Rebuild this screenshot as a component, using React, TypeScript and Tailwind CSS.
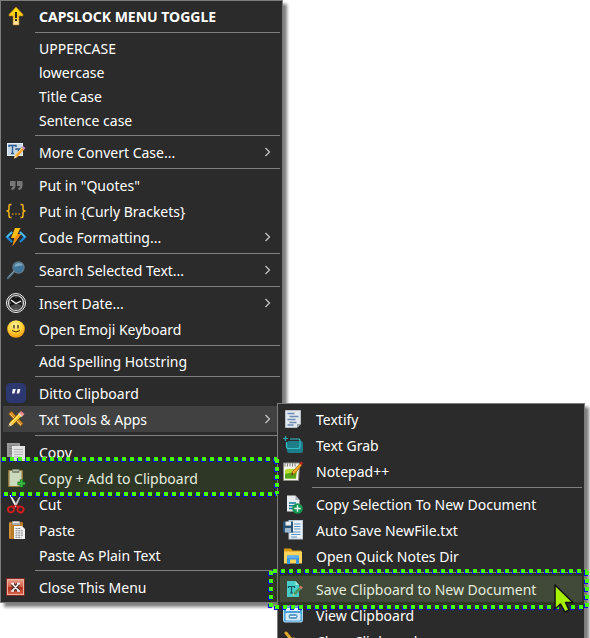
import type { ReactNode } from "react";

function Icon({ children }: { children?: ReactNode }) {
  return (
    <svg className="size-5 shrink-0 overflow-visible" viewBox="0 0 20 20" fill="none" aria-hidden="true">
      {children}
    </svg>
  );
}

const capsArrow = (
  <Icon>
    <defs>
      <linearGradient id="caps" x1="0" y1="0" x2="0" y2="1">
        <stop offset="0" stopColor="#ffe500" />
        <stop offset="0.5" stopColor="#ffc61a" />
        <stop offset="1" stopColor="#ffe9b8" />
      </linearGradient>
    </defs>
    <path d="M10 1 L17 8.500 V10 H13 V19 H7 V10 H3 V8.500Z" fill="url(#caps)" stroke="#b97a10" strokeWidth="0.600" />
    <path d="M10 6v6M10 13v2" stroke="#111" strokeWidth="1.800" />
  </Icon>
);

const convertCase = (
  <Icon>
    <rect x="1" y="1" width="16" height="13" fill="#c6d7e6" />
    <rect x="1.500" y="1.500" width="15" height="12" stroke="#e8f0f6" />
    <path d="M3 5V3.500h7V5M6.500 3.500v8M5 11.500h3M10 8V7h5v1M12.500 7v4.500" stroke="#2d5b8c" strokeWidth="1.400" />
    <path d="M8 16.500l1.500-4L16 5l2.500 2-7 8Z" fill="#f5a52c" />
    <path d="M9.500 13l7-7.500" stroke="#ffe09a" />
    <path d="M15.500 5.500L17 4l2.500 2L18 7.500Z" fill="#c58fc9" />
    <path d="M8 16.500l1-3 2 1.500Z" fill="#f7e6c8" />
  </Icon>
);

const quotes = (
  <Icon>
    <path d="M4 6h5.500v4.500Q9.500 14 6 15.200L5 13.500Q6.800 12.700 7 11H4Z" fill="#777" />
    <path d="M11 6h5.500v4.500Q16.500 14 13 15.200L12 13.500Q13.800 12.700 14 11H11Z" fill="#777" />
  </Icon>
);

const braces = (
  <Icon>
    <g stroke="#f5b21b" strokeWidth="1.500">
      <path d="M5.500 3.500H4.200Q3 3.500 3 5v3Q3 10 .5 10Q3 10 3 12v3Q3 16.500 4.200 16.500H5.500" />
      <path d="M14.500 3.500h1.300Q17 3.500 17 5v3q0 2 2.500 2Q17 10 17 12v3q0 1.500-1.200 1.500h-1.300" />
    </g>
    <path d="M6 13h1.500M9.200 13h1.500M12.400 13h1.500" stroke="#c8921c" strokeWidth="1.500" />
  </Icon>
);

const bolt = (
  <Icon>
    <path d="M6 5L1 10l5 5" stroke="#1c86d1" strokeWidth="2.400" />
    <path d="M14 5l5 5-5 5" stroke="#1c86d1" strokeWidth="2.400" />
    <path d="M6 5L1 10M14 5l5 5" stroke="#52c5ee" strokeWidth="1.600" />
    <path d="M9 1h5.500L11.500 7H15L6.500 19l2-8H5Z" fill="#ffbd17" />
    <path d="M11.500 7H15L6.500 19l2-8 2-2Z" fill="#f48b16" />
  </Icon>
);

const magnifier = (
  <Icon>
    <path d="M8 11.500L2 18" stroke="#536d7d" strokeWidth="2.400" strokeLinecap="round" />
    <path d="M8 11l-5 5.500" stroke="#8caabb" strokeWidth="0.800" />
    <circle cx="12.500" cy="7.500" r="5.600" fill="#3f7598" stroke="#65798a" strokeWidth="1.200" />
    <path d="M8.500 7Q9 3 13 3q3 0 4 2.500Q13 5 8.500 7Z" fill="#7fa9c2" />
  </Icon>
);

const clock = (
  <Icon>
    <circle cx="10" cy="10" r="9.500" fill="#3d3d3d" stroke="#eee" strokeWidth="1" />
    <circle cx="10" cy="10" r="7.500" fill="#171717" stroke="#ddd" strokeWidth="1.200" />
    <path d="M4 13a7 7 0 0 0 12 0Q13 9 4 13Z" fill="#4b4b4b" />
    <path d="M5 7l5 3.500L15 8" stroke="#fff" strokeWidth="1.200" />
    <path d="M10 3.500v1M10 15.500v1M3.500 10h1M15.500 10h1" stroke="#bbb" />
  </Icon>
);

const emoji = (
  <Icon>
    <defs>
      <radialGradient id="smile" cx="0.45" cy="0.3" r="0.75">
        <stop offset="0" stopColor="#fff3a3" />
        <stop offset="0.5" stopColor="#ffd43b" />
        <stop offset="1" stopColor="#f08c00" />
      </radialGradient>
    </defs>
    <circle cx="10" cy="10" r="8.800" fill="url(#smile)" />
    <path d="M8 6v3.500M12 6v3.500" stroke="#2b1c05" strokeWidth="1.200" />
    <path d="M6 11.500Q10 14.500 14 11.500" stroke="#3a2505" strokeWidth="1" />
  </Icon>
);

const ditto = (
  <Icon>
    <rect width="20" height="20" rx="4.500" fill="#2d3770" />
    <path d="M6.800 6h3L8.500 10.500H6Z M11.500 6h3l-1.300 4.500h-2.500Z" fill="#fff" />
  </Icon>
);

const tools = (
  <Icon>
    <path d="M2.500 5l3-3L17 14.500l-2.500 3Z" fill="#d9932c" stroke="#6e430f" strokeWidth="0.700" />
    <path d="M4 5l11 11" stroke="#f3c06a" strokeWidth="1" />
    <path d="M2.500 17.500L4 13 13.500 3.500l3 3L7 16Z" fill="#f6c62e" stroke="#6e4a0f" strokeWidth="0.700" />
    <path d="M4.500 14.500l9.500-9.500" stroke="#fff08a" strokeWidth="1" />
    <path d="M13 4l2-2 3.500 3-2 2.500Z" fill="#ee8a8d" />
    <path d="M12.500 4.500l3.500 3" stroke="#ddd" strokeWidth="1.300" />
    <path d="M2 18l2-4.500 2.500 2.500Z" fill="#f0dfbf" />
    <path d="M2 18l1-2 1 1Z" fill="#222" />
  </Icon>
);

const copyPages = (
  <Icon>
    <rect x="1" y="1" width="13" height="14" fill="#999" />
    <path d="M3 4h8M3 6.500h3M3 9h3M3 11.500h3" stroke="#777" />
    <path d="M6 4h13v15H6Z" fill="#e4e4e4" />
    <path d="M8 7.500h9M8 10h9M8 12.500h9M8 15h6" stroke="#b5b5b5" />
  </Icon>
);

const clipboardAdd = (
  <Icon>
    <rect x="2" y="2" width="15" height="17" rx="1" fill="#9c7445" />
    <rect x="3.500" y="3" width="12" height="15" fill="#e1e8da" />
    <rect x="6" y="1" width="7.500" height="4" rx="1" fill="#8d9189" />
    <path d="M7 2.500h5.500" stroke="#cfd3ca" />
    <path d="M15.500 11.500v8M11.500 15.500h8" stroke="#0b641e" strokeWidth="3.400" />
    <path d="M15.500 12v7M12 15.500h7" stroke="#39bf4c" strokeWidth="2.200" />
  </Icon>
);

const scissors = (
  <Icon>
    <path d="M3.500 1L5 1l6.500 11-2 1.500Z" fill="#f2f2f2" />
    <path d="M15.500 1L14.500 .8l-6.500 11 2 1.500Z" fill="#c2c2c2" />
    <path d="M8.500 11l-1 3M10.500 11l1.500 3" stroke="#c71515" strokeWidth="2" />
    <ellipse cx="5" cy="15.500" rx="3" ry="2.800" transform="rotate(-25 5 15.500)" stroke="#d51c1c" strokeWidth="1.900" />
    <ellipse cx="14.500" cy="15.500" rx="3" ry="2.800" transform="rotate(25 14.500 15.500)" stroke="#d51c1c" strokeWidth="1.900" />
  </Icon>
);

const paste = (
  <Icon>
    <rect x="3" y="2" width="14" height="17" rx="1" fill="#b87b24" />
    <path d="M4 3v15" stroke="#e3aa51" />
    <rect x="6" y="1" width="8" height="4" rx="1" fill="#aaa" />
    <path d="M7 2.500h6" stroke="#eee" />
    <path d="M8 6h8l3 3v10H8Z" fill="#f2f2f2" />
    <path d="M9.500 8.500h5M9.500 10.800h8M9.500 13h8M9.500 15.200h8M9.500 17.300h6" stroke="#777" strokeWidth="0.900" strokeDasharray="2 0.700" />
  </Icon>
);

const closeBox = (
  <Icon>
    <defs>
      <linearGradient id="close" x1="0" y1="0" x2="0" y2="1">
        <stop offset="0" stopColor="#e9a493" />
        <stop offset="0.48" stopColor="#d4604b" />
        <stop offset="0.5" stopColor="#b22a18" />
        <stop offset="1" stopColor="#dd6e55" />
      </linearGradient>
    </defs>
    <rect x="0.500" y="1.500" width="18" height="17" fill="url(#close)" stroke="#7c2a20" />
    <rect x="1.500" y="2.500" width="16" height="15" stroke="#eab1a4" />
    <path d="M6.500 7l6 6.500M12.500 7l-6 6.500" stroke="#4b2a26" strokeWidth="4" />
    <path d="M6.500 7l6 6.500M12.500 7l-6 6.500M5 6.500h3M11 6.500h3M5 14h3M11 14h3" stroke="#eee" strokeWidth="1.700" />
  </Icon>
);

const textify = (
  <Icon>
    <path d="M2.500 1.500h15V15l-3.500 3.500H2.500Z" fill="#e3e8ed" stroke="#b9c0c8" />
    <path d="M14 18.500V15h3.500Z" fill="#98a3ad" />
    <path d="M4.500 4.500h7M6.500 7.500h9M4.500 10.500h8M6.500 13.500h7M4.500 16h6" stroke="#6b8bb5" strokeWidth="1.600" />
  </Icon>
);

const textGrab = (
  <Icon>
    <rect x="4" y="6" width="16" height="12" rx="2.500" fill="#1d7e89" />
    <path d="M7 4h8.500Q17 4 17 5.500v6q0 2-2 2H5q-1.500 0-1.500-1.500V7" stroke="#35c0cc" strokeWidth="1.200" />
    <path d="M2.500 1v5M0 3.500h5" stroke="#2ba5b2" strokeWidth="1.200" />
  </Icon>
);

const notepad = (
  <Icon>
    <path d="M.5 2h16l-1 17.500H.5Z" fill="#f4f4ee" stroke="#8c8c84" />
    <path d="M2 2.500v3M4.500 2.500v3M7 2.500v3M9.500 2.500v3M12 2.500v3" stroke="#777" />
    <path d="M2 9q5-2.500 12 0l-1 8.500H2Z" fill="#b9dc2f" />
    <path d="M2 13q6-1 11.500-3l-.7 7.500H2Z" fill="#57a51a" />
    <path d="M8.500 14l1-3.500L17 2.500l2 1.500-7.500 9Z" fill="#f7a81e" stroke="#7a4a09" strokeWidth="0.600" />
    <path d="M16.500 2.500L18 .5l2 1.500L18.800 4Z" fill="#c3202b" />
    <path d="M8.500 14l.7-2 1.300 1Z" fill="#222" />
  </Icon>
);

const docAdd = (
  <Icon>
    <path d="M4 1.500h8.500l4 4.500V17.500H4Z" fill="#e9edef" />
    <path d="M12.500 1.500V6h4Z" fill="#a9b1b6" />
    <path d="M6 9h7M6 11.700h6M6 14.400h4" stroke="#147a9c" strokeWidth="1.500" />
    <circle cx="14.500" cy="14.500" r="5.300" fill="#179553" />
    <path d="M14.500 11.300v6.400M11.300 14.500h6.400" stroke="#e9fff0" strokeWidth="1.400" />
  </Icon>
);

const autoSave = (
  <Icon>
    <rect x="6" y="0.500" width="13.500" height="18.500" fill="#edf2f6" stroke="#b8c9d8" />
    <path d="M11 4h6.500M11 6.500h6.500M11 9h6.500M8 12h9.500M8 14.500h9.500M8 17h6" stroke="#5a94c4" strokeWidth="1.200" />
    <rect x="0" y="1.500" width="10" height="11" fill="#2a5276" />
    <rect x="2.500" y="1.500" width="5.500" height="4" fill="#e8eef3" />
    <rect x="2" y="8" width="6" height="4.500" fill="#9fb8cb" />
  </Icon>
);

const folder = (
  <Icon>
    <path d="M1 2.500h7l1.500 2H18V7H1Z" fill="#dc9a12" />
    <path d="M1 5.500h18v12H1Z" fill="#fdd35c" />
    <path d="M4 18v-7.500q0-1 1-1h10q1 0 1 1V18h-3v-4.500H7V18Z" fill="#3d97e2" />
    <path d="M4 12v-1.500q0-1 1-1h10q1 0 1 1V12Z" fill="#5eb0f0" />
  </Icon>
);

const saveDoc = (
  <Icon>
    <path d="M4 2h8.500L16 6v12H4Z" fill="#48dbe6" />
    <path d="M12.500 2v4H16Z" fill="#b5f5f8" />
    <path d="M5.500 9V7.500h6V9M8.500 7.500V14M7 14h3" stroke="#0d5270" strokeWidth="1.200" />
    <path d="M10 16.500l1-3L16.500 8l2 2-5.500 5.500Z" fill="#4e9d70" />
    <path d="M16 8.500l1.500-2 2.500 2-1.800 2Z" fill="#d77b7b" />
    <path d="M9.500 17l1-2.500 1.500 1.500Z" fill="#e9d7b0" />
  </Icon>
);

const viewClip = (
  <Icon>
    <rect x="0.500" y="1" width="19" height="16" rx="1.500" fill="#4aa2dc" stroke="#b6dcf3" />
    <rect x="3" y="3" width="14" height="3" fill="#dff0fa" />
    <rect x="2.500" y="8" width="15" height="7.500" rx="1" fill="#d7eaf6" />
    <rect x="5.500" y="9" width="9" height="5" rx="2" fill="#5d9fca" />
    <path d="M7 11.500h6" stroke="#eef8ff" />
  </Icon>
);

const broom = (
  <Icon>
    <path d="M3 2L8 8" stroke="#e0a92b" strokeWidth="3" strokeLinecap="round" />
    <path d="M6 9l5-3 6 9-7 4Z" fill="#d99a24" />
  </Icon>
);

type Entry = {
  label: string;
  icon?: ReactNode;
  arrow?: boolean;
  bold?: boolean;
  active?: boolean;
  marked?: boolean;
  compact?: boolean;
  submenu?: Entry[][];
};

const toolsMenu: Entry[][] = [
  [
    { label: "Textify", icon: textify },
    { label: "Text Grab", icon: textGrab },
    { label: "Notepad++", icon: notepad },
  ],
  [
    { label: "Copy Selection To New Document", icon: docAdd },
    { label: "Auto Save NewFile.txt", icon: autoSave },
    { label: "Open Quick Notes Dir", icon: folder },
  ],
  [
    { label: "Save Clipboard to New Document", icon: saveDoc, active: true, marked: true },
    { label: "View Clipboard", icon: viewClip },
    { label: "Clear Clipboard", icon: broom },
  ],
];

const mainMenu: Entry[][] = [
  [{ label: "CAPSLOCK MENU TOGGLE", icon: capsArrow, bold: true }],
  [
    { label: "UPPERCASE", compact: true },
    { label: "lowercase", compact: true },
    { label: "Title Case", compact: true },
    { label: "Sentence case", compact: true },
  ],
  [{ label: "More Convert Case...", icon: convertCase, arrow: true }],
  [
    { label: 'Put in "Quotes"', icon: quotes },
    { label: "Put in {Curly Brackets}", icon: braces },
    { label: "Code Formatting...", icon: bolt, arrow: true },
  ],
  [{ label: "Search Selected Text...", icon: magnifier, arrow: true }],
  [
    { label: "Insert Date...", icon: clock, arrow: true },
    { label: "Open Emoji Keyboard", icon: emoji },
  ],
  [{ label: "Add Spelling Hotstring", compact: true }],
  [
    { label: "Ditto Clipboard", icon: ditto },
    { label: "Txt Tools & Apps", icon: tools, arrow: true, active: true, submenu: toolsMenu },
  ],
  [
    { label: "Copy", icon: copyPages },
    { label: "Copy + Add to Clipboard", icon: clipboardAdd, marked: true },
    { label: "Cut", icon: scissors },
    { label: "Paste", icon: paste },
    { label: "Paste As Plain Text", compact: true },
  ],
  [{ label: "Close This Menu", icon: closeBox }],
];

function Marquee({ nested }: { nested: boolean }) {
  return (
    <span
      className={
        nested
          ? "pointer-events-none absolute -top-[5px] -right-[5px] -bottom-[5px] -left-[9px] z-30"
          : "pointer-events-none absolute -top-1.5 right-[3px] -bottom-[3px] -left-[3px] z-30"
      }
    >
      <svg className="size-full overflow-visible" aria-hidden="true">
        <rect width="100%" height="100%" fill="#46800a" fillOpacity="0.14" />
        <g strokeWidth="4" strokeDasharray="4 4" fill="none">
          <g stroke="#0000ff" transform="translate(-1 1)">
            <line x1="2" y1="0" x2="100%" y2="0" />
            <line x1="4" y1="100%" x2="100%" y2="100%" />
            <line x1="100%" y1="0" x2="100%" y2="100%" />
            {nested && <line x1="0" y1="0" x2="0" y2="100%" />}
          </g>
          <g stroke="#46ff00">
            <line x1="2" y1="0" x2="100%" y2="0" />
            <line x1="4" y1="100%" x2="100%" y2="100%" />
            <line x1="100%" y1="0" x2="100%" y2="100%" />
            {nested && <line x1="0" y1="0" x2="0" y2="100%" />}
          </g>
        </g>
      </svg>
    </span>
  );
}

function Pointer() {
  return (
    <svg
      className="pointer-events-none absolute top-2 right-1 z-40 h-8 w-6 overflow-visible"
      viewBox="0 0 24 32"
      aria-hidden="true"
    >
      <path
        d="M1 1V25L6.500 20L11 28L15 26L11.500 18.500H19Z"
        fill="#a6f000"
        stroke="#111"
        strokeWidth="1.500"
        strokeLinejoin="round"
      />
    </svg>
  );
}

function Row({ entry, nested }: { entry: Entry; nested: boolean }) {
  return (
    <li className="relative" role="none">
      <button
        type="button"
        role="menuitem"
        aria-haspopup={entry.arrow ? "menu" : undefined}
        className={`flex w-full items-center gap-[13px] pr-2 pl-[3px] text-left ${entry.compact ? "h-6" : "h-[26px]"} ${
          entry.active ? "bg-[#414141]" : ""
        } ${entry.bold ? "font-bold" : ""}`}
      >
        {entry.icon ?? <Icon />}
        <span className="flex-1 pt-0.5 whitespace-nowrap">{entry.label}</span>
        {entry.arrow && (
          <svg className="h-3 w-2" viewBox="0 0 8 12" fill="none" aria-hidden="true">
            <path d="M1.500 2L5.500 6L1.500 10" stroke="#c8c8c8" strokeWidth="1.200" />
          </svg>
        )}
      </button>
      {entry.marked && <Marquee nested={nested} />}
      {entry.marked && nested && <Pointer />}
      {entry.submenu && (
        <div className="absolute -top-[3px] left-[calc(100%-3px)] z-20">
          <Menu groups={entry.submenu} nested />
        </div>
      )}
    </li>
  );
}

function Menu({ groups, nested = false }: { groups: Entry[][]; nested?: boolean }) {
  return (
    <div
      role="menu"
      className={`border border-[#7b7b7b] bg-[#2b2b2b] p-0.5 shadow-[4px_4px_3px_rgba(0,0,0,0.5)] ${
        nested ? "w-[308px]" : "w-[283px]"
      }`}
    >
      {groups.map((group, i) => (
        <div key={group[0].label} role="group">
          {i > 0 && <hr className="my-[3px] ml-8 border-t border-[#808080]" />}
          <ul role="none">
            {group.map((entry) => (
              <Row key={entry.label} entry={entry} nested={nested} />
            ))}
          </ul>
        </div>
      ))}
    </div>
  );
}

export default function App() {
  return (
    <main className="h-screen overflow-hidden bg-white font-['Noto_Sans','Open_Sans',sans-serif] text-sm text-white">
      <Menu groups={mainMenu} />
    </main>
  );
}
